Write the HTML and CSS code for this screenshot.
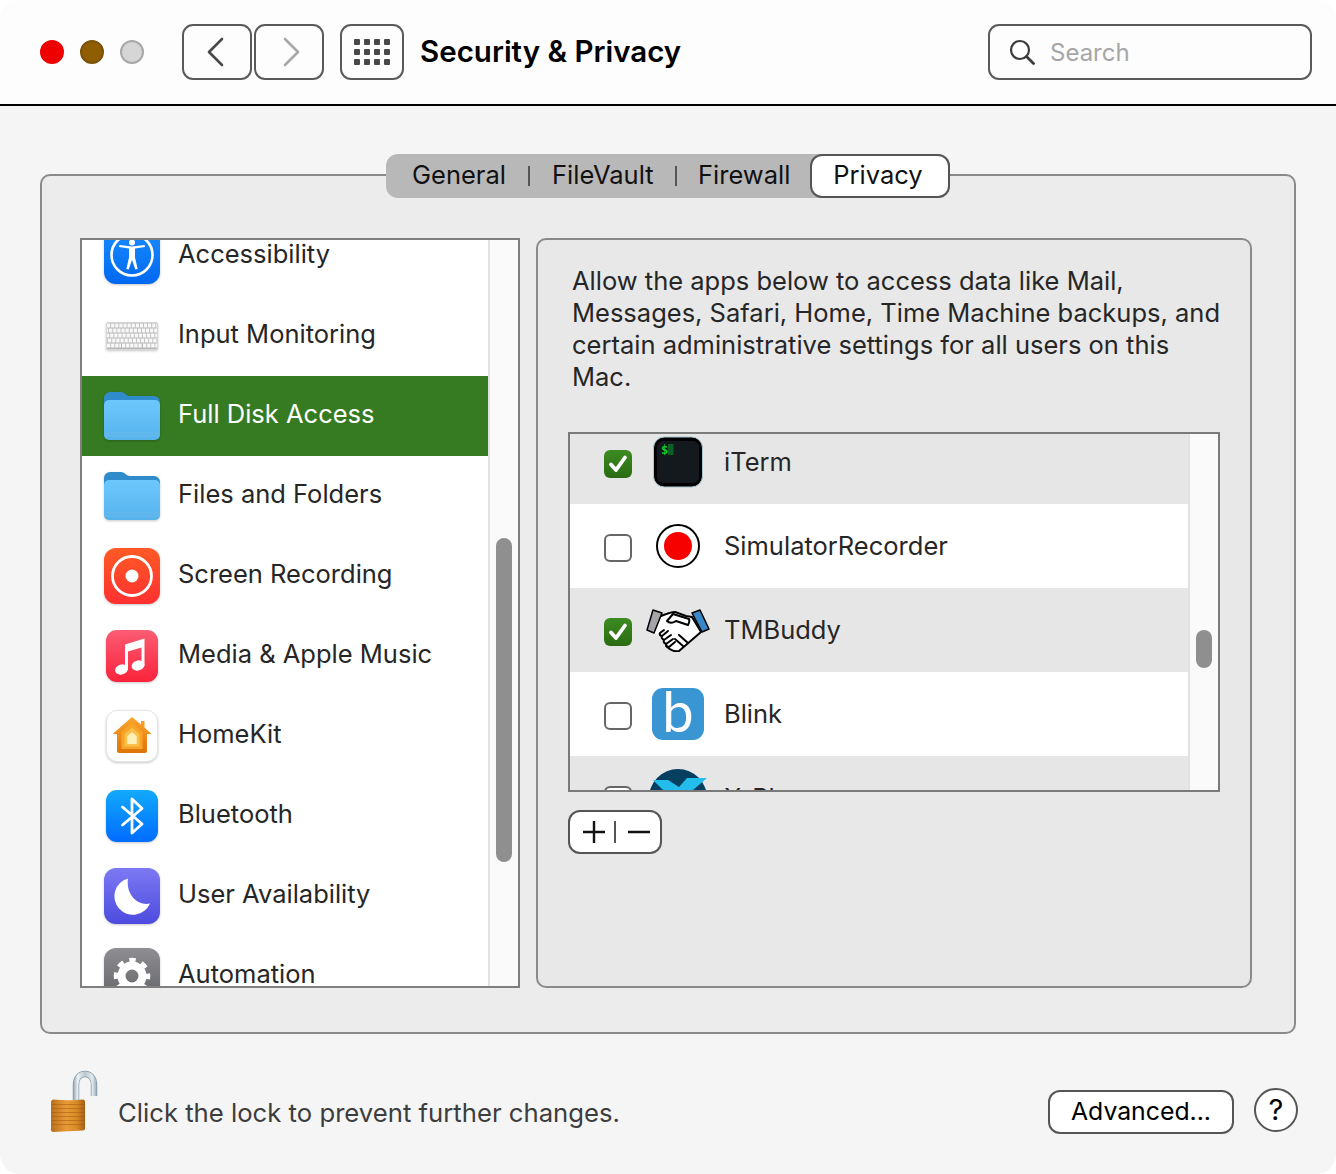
FILE: index.html
```html
<!DOCTYPE html>
<html lang="en">
<head>
<meta charset="utf-8">
<title>Security &amp; Privacy</title>
<link rel="stylesheet" href="styles.css">
</head>
<body>
<svg class="defs" width="0" height="0" aria-hidden="true">
  <defs>
    <linearGradient id="gFolder" x1="0" y1="0" x2="0" y2="1"><stop offset="0" stop-color="#6bc7fc"/><stop offset="1" stop-color="#57b3ec"/></linearGradient>
    <linearGradient id="gAcc" x1="0" y1="0" x2="0" y2="1"><stop offset="0" stop-color="#1a8dff"/><stop offset="1" stop-color="#0068f0"/></linearGradient>
    <linearGradient id="gRec" x1="0" y1="0" x2="0" y2="1"><stop offset="0" stop-color="#ff5a26"/><stop offset="1" stop-color="#ff3030"/></linearGradient>
    <linearGradient id="gMusic" x1="0" y1="0" x2="0" y2="1"><stop offset="0" stop-color="#fb5c74"/><stop offset="1" stop-color="#fa233b"/></linearGradient>
    <linearGradient id="gHome" x1="0" y1="0" x2="0" y2="1"><stop offset="0" stop-color="#fba52c"/><stop offset="1" stop-color="#df7408"/></linearGradient>
    <linearGradient id="gBt" x1="0" y1="0" x2="0" y2="1"><stop offset="0" stop-color="#12aafb"/><stop offset="1" stop-color="#006cff"/></linearGradient>
    <linearGradient id="gMoon" x1="0" y1="0" x2="0" y2="1"><stop offset="0" stop-color="#7d79f3"/><stop offset="1" stop-color="#4d4bdf"/></linearGradient>
    <linearGradient id="gGear" x1="0" y1="0" x2="0" y2="1"><stop offset="0" stop-color="#8e8e93"/><stop offset="1" stop-color="#5f6063"/></linearGradient>
    <linearGradient id="gShackle" gradientUnits="userSpaceOnUse" x1="23" y1="0" x2="47" y2="0"><stop offset="0" stop-color="#8ea3b2"/><stop offset=".2" stop-color="#eef2f5"/><stop offset=".5" stop-color="#b9c6cf"/><stop offset=".8" stop-color="#e4eaee"/><stop offset="1" stop-color="#93a6b3"/></linearGradient>
    <linearGradient id="gLock" x1="0" y1="0" x2="1" y2="0"><stop offset="0" stop-color="#b9701c"/><stop offset=".45" stop-color="#e79a35"/><stop offset=".75" stop-color="#d98b28"/><stop offset="1" stop-color="#a85f14"/></linearGradient>
    <symbol id="folder" viewBox="0 0 56 48">
      <path d="M0 6a6 6 0 0 1 6-6h11c4 0 5 4 9 4h24a6 6 0 0 1 6 6v20H0z" fill="#2f8bc9"/>
      <rect x="0" y="8" width="56" height="40" rx="5" fill="url(#gFolder)"/>
      <path d="M1 41h54M1 44h54" stroke="#74bdea" stroke-width=".7"/>
    </symbol>
    <symbol id="chk" viewBox="0 0 28 28">
      <path d="M7 14.500l5 5.500 9-12.500" fill="none" stroke="#fff" stroke-width="3.800" stroke-linecap="round" stroke-linejoin="round"/>
    </symbol>
  </defs>
</svg>
<div class="window">
  <header class="titlebar">
    <div class="lights">
      <span class="light light-red"></span>
      <span class="light light-brown"></span>
      <span class="light light-grey"></span>
    </div>
    <div class="nav">
      <button class="tool tool-nav"><svg class="chev-back" width="18" height="30" viewBox="0 0 18 30"><path d="M16 2L3 15l13 13" fill="none" stroke="#484848" stroke-width="2.600" stroke-linecap="round" stroke-linejoin="round"/></svg></button>
      <button class="tool tool-nav"><svg class="chev-fwd" width="18" height="30" viewBox="0 0 18 30"><path d="M2 2l13 13L2 28" fill="none" stroke="#a8a8a8" stroke-width="2.600" stroke-linecap="round" stroke-linejoin="round"/></svg></button>
    </div>
    <button class="tool tool-grid">
      <svg width="36" height="26" viewBox="0 0 36 26" fill="#484848">
        <rect x="0" y="0" width="6" height="6" rx="1"/><rect x="10" y="0" width="6" height="6" rx="1"/><rect x="20" y="0" width="6" height="6" rx="1"/><rect x="30" y="0" width="6" height="6" rx="1"/>
        <rect x="0" y="10" width="6" height="6" rx="1"/><rect x="10" y="10" width="6" height="6" rx="1"/><rect x="20" y="10" width="6" height="6" rx="1"/><rect x="30" y="10" width="6" height="6" rx="1"/>
        <rect x="0" y="20" width="6" height="6" rx="1"/><rect x="10" y="20" width="6" height="6" rx="1"/><rect x="20" y="20" width="6" height="6" rx="1"/><rect x="30" y="20" width="6" height="6" rx="1"/>
      </svg>
    </button>
    <h1 class="title">Security &amp; Privacy</h1>
    <div class="search">
      <svg width="26" height="26" viewBox="0 0 26 26"><circle cx="11" cy="11" r="9" fill="none" stroke="#3c3c3c" stroke-width="2.200"/><path d="M17.500 17.500L24.500 24.500" stroke="#3c3c3c" stroke-width="2.800" stroke-linecap="round"/></svg>
      <span class="search-text">Search</span>
    </div>
  </header>

  <main class="content">
    <nav class="tabs">
      <span class="tab tab-general">General</span>
      <i class="tab-sep"></i>
      <span class="tab tab-filevault">FileVault</span>
      <i class="tab-sep"></i>
      <span class="tab tab-firewall">Firewall</span>
      <span class="tab-active">Privacy</span>
    </nav>
    <section class="group">
      <div class="list-box">
        <ul class="cats">
          <li class="cat">
            <svg class="ic56" width="56" height="56" viewBox="0 0 56 56"><rect width="56" height="56" rx="12" fill="url(#gAcc)"/><circle cx="28" cy="27" r="20.500" fill="none" stroke="#fff" stroke-width="2.600"/><circle cx="28" cy="14.500" r="3" fill="#fff"/><path d="M15 19l10 1.600v9L22.300 41l2.400.6L28 32l3.300 9.600 2.400-.6L31 29.600v-9L41 19l-.4-2-12.600 1.600L15.400 17z" fill="#fff"/></svg>
            <span class="cat-name">Accessibility</span>
          </li>
          <li class="cat">
            <svg class="ic56" width="56" height="56" viewBox="0 0 56 56"><rect x="2.500" y="14.500" width="51" height="27" rx="1.500" fill="#b9b9b9" stroke="#d6d6d6"/><g fill="none" stroke="#f8f8f8" stroke-width="4"><path d="M3 17.500h50" stroke-dasharray="3.300 .8"/><path d="M3 22.500h50" stroke-dasharray="3.300 .8" stroke-dashoffset="2"/><path d="M3 27.500h50" stroke-dasharray="3.300 .8" stroke-dashoffset="1"/><path d="M3 32.500h50" stroke-dasharray="3.300 .8" stroke-dashoffset="3"/><path d="M3 37.500h14M18 37.500h20M39 37.500h14" stroke-dasharray="3.300 .8"/></g></svg>
            <span class="cat-name">Input Monitoring</span>
          </li>
          <li class="cat cat-selected">
            <svg class="ic56" width="56" height="48" viewBox="0 0 56 48"><use href="#folder"/></svg>
            <span class="cat-name">Full Disk Access</span>
          </li>
          <li class="cat">
            <svg class="ic56" width="56" height="48" viewBox="0 0 56 48"><use href="#folder"/></svg>
            <span class="cat-name">Files and Folders</span>
          </li>
          <li class="cat">
            <svg class="ic56" width="56" height="56" viewBox="0 0 56 56"><rect width="56" height="56" rx="12" fill="url(#gRec)"/><circle cx="28" cy="28" r="19.500" fill="none" stroke="#fff" stroke-width="2.800"/><circle cx="28" cy="28" r="6.500" fill="#fff"/></svg>
            <span class="cat-name">Screen Recording</span>
          </li>
          <li class="cat">
            <svg class="ic52" width="52" height="52" viewBox="0 0 52 52"><rect width="52" height="52" rx="11" fill="url(#gMusic)"/><path d="M19 14.500L38.500 8.500V36h-3V17.500l-13.500 4V40h-3z" fill="#fff"/><ellipse cx="15.500" cy="39.500" rx="6.500" ry="5" transform="rotate(-15 15.500 39.500)" fill="#fff"/><ellipse cx="32" cy="35.500" rx="6.500" ry="5" transform="rotate(-15 32 35.500)" fill="#fff"/></svg>
            <span class="cat-name">Media &amp; Apple Music</span>
          </li>
          <li class="cat">
            <svg class="ic52" width="52" height="52" viewBox="0 0 52 52"><rect x=".5" y=".5" width="51" height="51" rx="11" fill="#fff" stroke="#e6e6e6"/><path d="M26 7l9 7.500V11h3.500v6.500L45.500 24H41v17a2 2 0 0 1-2 2H13a2 2 0 0 1-2-2V24H6.500z" fill="url(#gHome)"/><path d="M26 13l10.500 9V39h-21V22z" fill="#f7a428"/><path d="M26 17.500l7.500 6.500v12.500h-15V24z" fill="#fbc04a"/><path d="M26 22l4.800 4.200v7.800h-9.600v-7.800z" fill="#fdf0b4"/></svg>
            <span class="cat-name">HomeKit</span>
          </li>
          <li class="cat">
            <svg class="ic52" width="52" height="52" viewBox="0 0 52 52"><rect width="52" height="52" rx="11" fill="url(#gBt)"/><path d="M16.500 17L36 34 26 43V9l10 9.500L16.500 35" fill="none" stroke="#fff" stroke-width="2.800" stroke-linejoin="round" stroke-linecap="round"/></svg>
            <span class="cat-name">Bluetooth</span>
          </li>
          <li class="cat">
            <svg class="ic56" width="56" height="56" viewBox="0 0 56 56"><rect width="56" height="56" rx="12" fill="url(#gMoon)"/><path d="M24 10.500A18.500 18.500 0 1 0 46 35.500C34.500 38.500 21.500 27 24 10.500z" fill="#fff"/></svg>
            <span class="cat-name">User Availability</span>
          </li>
          <li class="cat">
            <svg class="ic56" width="56" height="56" viewBox="0 0 56 56"><rect width="56" height="56" rx="12" fill="url(#gGear)"/><circle cx="28" cy="28" r="10.500" fill="none" stroke="#fff" stroke-width="8"/><circle cx="28" cy="28" r="16" fill="none" stroke="#fff" stroke-width="4.500" stroke-dasharray="6.400 6.170" stroke-dashoffset="3.200"/></svg>
            <span class="cat-name">Automation</span>
          </li>
        </ul>
        <div class="track track-cats"><span class="thumb thumb-cats"></span></div>
      </div>

      <div class="detail">
        <p class="detail-text">Allow the apps below to access data like Mail,<br>Messages, Safari, Home, Time Machine backups, and<br>certain administrative settings for all users on this<br>Mac.</p>
        <div class="apps-box">
          <ul class="apps">
            <li class="app app-alt">
              <span class="check check-on"><svg width="28" height="28"><use href="#chk"/></svg></span>
              <svg class="app-icon" width="64" height="52" viewBox="0 0 64 52"><rect x="7.500" y="1" width="49" height="50" rx="11" fill="#000" stroke="#a9c8cf" stroke-width="1"/><rect x="11" y="5" width="42" height="42" rx="6" fill="#14191d"/><text x="15" y="18" class="term-prompt">$</text><rect x="22" y="8" width="5.500" height="11" fill="#0a6025"/></svg>
              <span class="app-name">iTerm</span>
            </li>
            <li class="app">
              <span class="check"></span>
              <svg class="app-icon" width="64" height="44" viewBox="0 0 64 44"><circle cx="32" cy="22" r="21" fill="#fff" stroke="#000" stroke-width="2"/><circle cx="32" cy="22" r="14" fill="#f70000"/></svg>
              <span class="app-name">SimulatorRecorder</span>
            </li>
            <li class="app app-alt">
              <span class="check check-on"><svg width="28" height="28"><use href="#chk"/></svg></span>
              <svg class="app-icon" width="64" height="44" viewBox="0 0 64 44"><path d="M15 8l14-4 15 5 12 15-22 19c-5 1-11-1-15-4l-6-11-5-4z" fill="#fff"/><g fill="none" stroke="#000" stroke-width="2" stroke-linecap="round" stroke-linejoin="round"><path d="M15 8c5-2 10-4 14-4l11 4 6 1 9 15-22 19c-4 1-9-1-13-5"/><path d="M43 11L27 6l-6 7c3 3 6 2 9 0l12 4c1-2 2-4 1-6z"/><path d="M14 25l4-3M14 25c-1 1 0 3 2 3M16 28l6-5M16 28c-1 2 0 3 2 4M18 32l7-5M18 32c-1 2 0 3 2 4M20 36l7-5M20 36c0 2 1 3 3 3l6-5"/><path d="M33 27l9 8M29 31l8 7"/></g><path d="M7 2l9 3-8 20-7-3z" fill="#a3a5a8" stroke="#000" stroke-width="1.500" stroke-linejoin="round"/><path d="M54 2l9 19-7 3-10-19z" fill="#3a87c8" stroke="#000" stroke-width="1.500" stroke-linejoin="round"/></svg>
              <span class="app-name">TMBuddy</span>
            </li>
            <li class="app">
              <span class="check"></span>
              <svg class="app-icon" width="64" height="52" viewBox="0 0 64 52"><rect x="6" width="52" height="52" rx="11" fill="#3996d3"/><text x="32" y="44" text-anchor="middle" class="blink-b">b</text></svg>
              <span class="app-name">Blink</span>
            </li>
            <li class="app app-alt">
              <span class="check"></span>
              <svg class="app-icon" width="64" height="60" viewBox="0 0 64 60"><circle cx="32" cy="30" r="29" fill="#063f60"/><path d="M7 12l15 0 11 7 8-9 20 0-14 12-6 4-16 0-9-5z" fill="#22bdec"/></svg>
              <span class="app-name">X-Plane</span>
            </li>
          </ul>
          <div class="track track-apps"><span class="thumb thumb-apps"></span></div>
        </div>
        <button class="plusminus">
          <svg width="90" height="40" viewBox="0 0 90 40"><path d="M13 20h22M24 9v22M58 20h22" fill="none" stroke="#111" stroke-width="2.400"/><path d="M45 9v22" stroke="#555" stroke-width="2"/></svg>
        </button>
      </div>
    </section>

    <footer class="bottom">
      <svg class="lock" width="48" height="62" viewBox="0 0 48 62">
        <path d="M26 30V15C26 8 30 4 35 4s9 4 9 11v11" fill="none" stroke="#8599a8" stroke-width="6.500"/>
        <path d="M26 30V15C26 8 30 4 35 4s9 4 9 11v11" fill="none" stroke="url(#gShackle)" stroke-width="5"/>
        <path d="M3 29.500c10 1 22 1 30 0 1 0 2 1 2 2v27c0 1-1 2-2 2l-30 1.500c-1 0-2-1-2-2v-28c0-1 1-2 2-2.500z" fill="url(#gLock)"/>
        <path d="M1 34.500h34M1 38.500h34M1 42.500h34M1 46.500h34M1 50.500h34M1 54.500h34" stroke="#a2590f" stroke-width="1" opacity=".5"/>
      </svg>
      <span class="bottom-text">Click the lock to prevent further changes.</span>
      <button class="advanced">Advanced...</button>
      <button class="help">?</button>
    </footer>
  </main>
</div>
</body>
</html>
```
FILE: styles.css
```css
* { box-sizing: border-box; }
html, body { margin: 0; padding: 0; background: #fff; }
body { font-family: Inter, "Liberation Sans", sans-serif; color: #262626; }
.defs { position: absolute; }
ul { list-style: none; margin: 0; padding: 0; }
button { font-family: inherit; padding: 0; margin: 0; }

.window { width: 1336px; height: 1174px; background: #f5f5f5; border-radius: 20px; overflow: hidden; }

.titlebar { height: 106px; background: #fdfdfd; border-bottom: 2px solid #000; display: flex; align-items: center; padding: 0 24px 0 40px; }
.lights { display: flex; gap: 16px; margin-right: 38px; }
.light { width: 24px; height: 24px; border-radius: 50%; }
.light-red { background: #ee0000; }
.light-brown { background: #8f5e00; border: 2px solid #7a5208; }
.light-grey { background: #d6d6d6; border: 2px solid #a8a8a8; }
.nav { display: flex; gap: 2px; margin-right: 16px; }
.tool { height: 56px; background: #fdfdfd; border: 2px solid #5a5a5a; border-radius: 11px; display: flex; align-items: center; justify-content: center; }
.tool-nav { width: 70px; }
.chev-back { margin-right: 4px; }
.chev-fwd { margin-left: 6px; }
.tool-grid { width: 64px; margin-right: 17px; }
.title { margin: -2px 0 0 -1px; font-size: 29.5px; font-weight: 600; color: #000; line-height: 36px; flex: 1; }
.search { width: 324px; height: 56px; border: 2px solid #5a5a5a; border-radius: 11px; display: flex; align-items: center; padding-left: 19px; gap: 15px; background: #fdfdfd; }
.search-text { font-size: 24px; color: #a6a6a6; line-height: 30px; margin-top: 2px; }

.content { display: flex; flex-direction: column; align-items: center; padding-top: 48px; }
.tabs { position: relative; z-index: 1; height: 44px; margin-bottom: -24px; width: 564px; background: #b8b8b8; border-radius: 12px; display: flex; align-items: center; font-size: 25.5px; color: #111; }
.tab { line-height: 40px; margin-top: -2px; }
.tab-general { margin-left: 26px; width: 94px; }
.tab-sep { width: 2px; height: 20px; background: #555; margin: 0 22px; }
.tab-filevault { width: 101px; }
.tab-firewall { width: 92px; margin-left: -1px; }
.tab-active { margin-left: 20px; flex: 1; height: 44px; background: #fff; border: 2px solid #555; border-radius: 12px; text-align: center; line-height: 38px; padding-right: 4px; }

.group { width: 1256px; height: 860px; background: #ececec; border: 2px solid #8a8a8a; border-radius: 10px; padding: 62px 42px 44px 38px; display: flex; gap: 16px; }

.list-box { width: 440px; height: 750px; border: 2px solid #7f7f7f; background: #fff; display: flex; overflow: hidden; }
.cats { width: 406px; margin-top: -24px; flex: none; }
.cat { height: 80px; display: flex; align-items: center; padding-left: 22px; font-size: 25.5px; color: #262626; }
.ic56, .ic52 { flex: none; display: block; filter: drop-shadow(0 1px 1px rgba(0,0,0,.22)); }
.ic52 { margin: 0 2px; }
.cat-name { margin-left: 18px; line-height: 32px; margin-top: -4px; }
.cat-selected { background: #367a22; color: #fff; }
.track { flex: none; width: 30px; background: #fafafa; border-left: 2px solid #e2e2e2; padding-left: 6px; }
.thumb { display: block; width: 16px; background: #8f8f8f; border-radius: 8px; }
.thumb-cats { height: 324px; margin-top: 298px; }

.detail { width: 716px; height: 750px; background: #e8e8e8; border: 2px solid #8a8a8a; border-radius: 10px; padding: 25px 0 0 30px; }
.detail-text { margin: 0 0 39px 4px; font-size: 25.5px; line-height: 32px; color: #262626; white-space: nowrap; }
.apps-box { width: 652px; height: 360px; border: 2px solid #7a7a7a; background: #fff; display: flex; overflow: hidden; }
.apps { width: 618px; margin-top: -14px; flex: none; }
.app { height: 84px; display: flex; align-items: center; padding-left: 34px; font-size: 25.5px; color: #262626; background: #fff; }
.app-alt { background: #e6e6e6; }
.check { flex: none; width: 28px; height: 28px; border-radius: 6px; background: #fff; border: 2px solid #666; margin: 4px 14px 0 0; }
.check-on { background: linear-gradient(#3d8c22, #2a6b12); border: none; }
.check-on svg { display: block; }
.app-icon { flex: none; display: block; }
.app-name { margin-left: 14px; line-height: 32px; }
.term-prompt { font-family: "DejaVu Sans Mono", monospace; font-size: 12px; font-weight: 700; fill: #19c82e; }
.blink-b { font-family: Lato, sans-serif; font-size: 56px; font-weight: 400; fill: #fff; }
.thumb-apps { height: 38px; margin-top: 196px; }
.plusminus { display: block; width: 94px; height: 44px; margin-top: 18px; background: #fff; border: 2px solid #555; border-radius: 12px; }
.plusminus svg { display: block; }

.bottom { width: 1336px; display: flex; align-items: flex-start; padding: 36px 38px 0 50px; }
.lock { flex: none; display: block; }
.bottom-text { margin: 27px 0 0 20px; font-size: 25.7px; line-height: 32px; color: #3d3d3d; flex: 1; }
.advanced { width: 186px; height: 44px; margin-top: 20px; background: #fff; border: 2px solid #555; border-radius: 12px; font-size: 24.8px; color: #000; line-height: 36px; padding-bottom: 3px; }
.help { width: 44px; height: 44px; margin: 18px 0 0 20px; background: #fff; border: 2px solid #555; border-radius: 50%; font-size: 29px; font-weight: 400; color: #000; line-height: 38px; }
```
